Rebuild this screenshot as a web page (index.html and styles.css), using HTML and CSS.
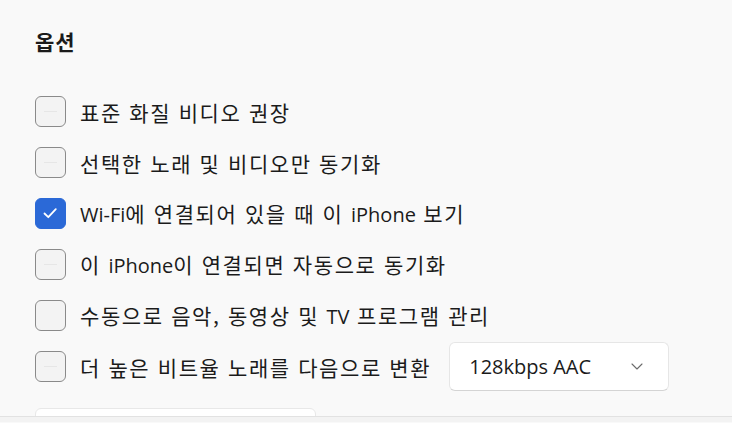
FILE: index.html
```html
<!DOCTYPE html>
<html lang="ko">
<head>
<meta charset="utf-8">
<link rel="stylesheet" href="styles.css">
</head>
<body>
<div class="scroll">
  <h2 class="title">옵션</h2>
  <div class="options">
    <label class="row"><span class="box dash"></span><span class="label">표준 화질 비디오 권장</span></label>
    <label class="row"><span class="box dash"></span><span class="label">선택한 노래 및 비디오만 동기화</span></label>
    <label class="row"><span class="box checked"><svg viewBox="0 0 30 30" width="30" height="30"><path d="M9.5 15.5 L13.3 19.2 L20.8 11.2" fill="none" stroke="#fff" stroke-width="1.8" stroke-linecap="round" stroke-linejoin="round"/></svg></span><span class="label"><span class="en">Wi-Fi</span>에 연결되어 있을 때 이 <span class="en">iPhone</span> 보기</span></label>
    <label class="row"><span class="box dash"></span><span class="label">이 <span class="en">iPhone</span>이 연결되면 자동으로 동기화</span></label>
    <label class="row"><span class="box"></span><span class="label">수동으로 음악, 동영상 및 <span class="en">TV</span> 프로그램 관리</span></label>
    <div class="row">
      <span class="box dash"></span><span class="label">더 높은 비트율 노래를 다음으로 변환</span>
      <div class="select"><span>128kbps AAC</span><svg viewBox="0 0 12 7" width="12" height="7"><path d="M1 1 L6 6 L11 1" fill="none" stroke="#6b6b6b" stroke-width="1.1" stroke-linecap="round" stroke-linejoin="round"/></svg></div>
    </div>
  </div>
  <div class="button"></div>
</div>
<div class="bar"></div>
</body>
</html>
```

FILE: styles.css
```css
html, body {
  margin: 0;
  padding: 0;
  background: #f9f9f9;
}
body {
  width: 732px;
  height: 423px;
  overflow: hidden;
  font-family: "Noto Sans CJK KR", "Noto Sans", sans-serif;
  color: #1b1b1b;
}
.scroll {
  height: 417px;
  overflow: hidden;
  padding: 26px 0 0 35px;
  box-sizing: border-box;
  border-bottom: 1px solid #e2e2e2;
}
.title {
  margin: 0;
  font-size: 21px;
  font-weight: 700;
  line-height: 30px;
  height: 30px;
  letter-spacing: 1px;
}
.options {
  margin-top: 30px;
  display: flex;
  flex-direction: column;
}
.row {
  display: flex;
  align-items: center;
  height: 51px;
  gap: 14px;
}
.label {
  font-size: 21px;
  line-height: 28px;
  letter-spacing: 1.6px;
}
.label .en {
  font-family: "Open Sans", "Noto Sans", sans-serif;
  letter-spacing: 0;
  font-size: 20px;
}
.box {
  width: 31px;
  height: 31px;
  box-sizing: border-box;
  border: 1.5px solid #8a8a8a;
  border-radius: 6px;
  background: #f3f3f3;
  position: relative;
  flex: none;
}
.box.dash::after {
  content: "";
  position: absolute;
  left: 8px;
  right: 8px;
  top: 13.5px;
  height: 1px;
  background: #e6e6e6;
}
.box.checked {
  background: #2b69d7;
  border-color: #2b69d7;
}
.box.checked svg {
  position: absolute;
  left: -1.5px;
  top: -1.5px;
}
.select {
  margin-left: 4px;
  width: 220px;
  height: 49px;
  box-sizing: border-box;
  background: #ffffff;
  border: 1px solid #e6e6e6;
  border-bottom-color: #d4d4d4;
  border-radius: 6px;
  display: flex;
  align-items: center;
  justify-content: space-between;
  padding: 0 25px 0 19px;
  font-family: "Open Sans", "Noto Sans", sans-serif;
  font-size: 20px;
}
.button {
  margin-top: 16px;
  width: 281px;
  height: 40px;
  background: #ffffff;
  border: 1px solid #e8e8e8;
  border-radius: 6px;
  box-sizing: border-box;
}
.bar {
  height: 5px;
  background: #f3f3f3;
}
```
